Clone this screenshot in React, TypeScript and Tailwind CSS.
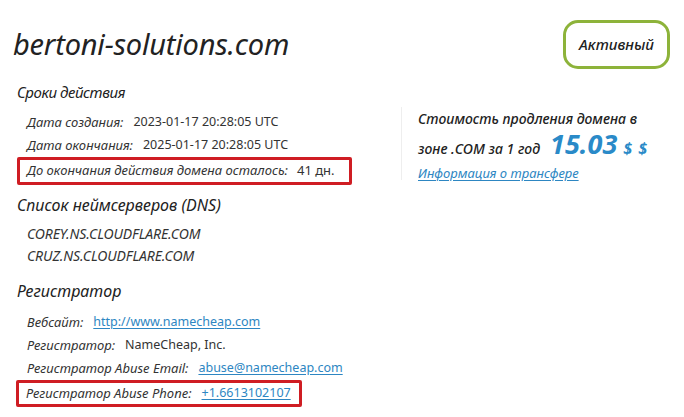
import React from "react";

const F = { fontFamily: '"Noto Sans", "Open Sans", sans-serif' };

function Row({ label, children }: { label: string; children: React.ReactNode }) {
  return (
    <div className="flex items-center h-[23px] text-[#333]">
      <span className="italic text-[13px]">{label}</span>
      <span className="ml-[10px] text-[12.5px]">{children}</span>
    </div>
  );
}

function Link({ children }: { children: React.ReactNode }) {
  return <span className="text-[#2d86c2] underline underline-offset-2">{children}</span>;
}

export default function App() {
  return (
    <div className="w-[684px] h-[417px] bg-white relative overflow-hidden" style={F}>
      <div className="flex justify-between items-start">
        <div className="pl-[13px] pt-[27px] text-[29px] leading-[34px] italic text-[#222] tracking-[-0.2px]">
          bertoni-solutions.com
        </div>
        <div className="mt-[20px] mr-[14px] w-[107px] h-[49px] border-[3px] border-[#8db33a] rounded-[15px] flex items-center justify-center italic font-medium text-[15px] text-[#222]">
          Активный
        </div>
      </div>
      <div className="flex">
        <div className="w-[401px] pl-[17px]">
          <div className="mt-[12px] text-[15px] italic text-[#222] leading-[22px] tracking-[-0.4px]">Сроки действия</div>
          <div className="mt-[8px] pl-[10px]">
            <Row label="Дата создания:">2023-01-17 20:28:05 UTC</Row>
            <Row label="Дата окончания:">2025-01-17 20:28:05 UTC</Row>
          </div>
          <div className="inline-block border-[3px] border-[#cf1d23] rounded-[2px] pl-[7px] pr-[14px] h-[28px] -mt-[1px]">
            <div className="flex items-center h-full text-[#333]">
              <span className="italic text-[13px]">До окончания действия домена осталось:</span>
              <span className="ml-[9px] text-[13px]">41 дн.</span>
            </div>
          </div>
          <div className="mt-[9px] text-[16px] italic text-[#222] leading-[22px]">Список неймсерверов (DNS)</div>
          <div className="mt-[7px] pl-[10px] text-[14px] italic text-[#333] uppercase tracking-[-0.1px]">
            <div className="h-[22px] flex items-center">COREY.NS.CLOUDFLARE.COM</div>
            <div className="h-[22px] flex items-center">CRUZ.NS.CLOUDFLARE.COM</div>
          </div>
          <div className="mt-[13px] text-[16px] italic text-[#222] leading-[22px]">Регистратор</div>
          <div className="mt-[9px] pl-[10px]">
            <Row label="Вебсайт:"><Link>http://www.namecheap.com</Link></Row>
            <Row label="Регистратор:">NameCheap, Inc.</Row>
            <Row label="Регистратор Abuse Email:"><Link>abuse@namecheap.com</Link></Row>
          </div>
          <div className="inline-block border-[3px] border-[#cf1d23] rounded-[2px] pl-[7px] pr-[8px] h-[27px] -ml-[1px]">
            <div className="flex items-center h-full text-[#333]">
              <span className="italic text-[13px]">Регистратор Abuse Phone:</span>
              <span className="ml-[10px] text-[12.5px]"><Link>+1.6613102107</Link></span>
            </div>
          </div>
        </div>
        <div className="mt-[38px] h-[73px] border-l border-[#eeeeee] pl-[16px] pt-[2px]">
          <div className="text-[14px] italic font-medium text-[#222] leading-[20px]">Стоимость продления домена в</div>
          <div className="flex items-baseline text-[14px] italic font-medium text-[#222] leading-[30px]">
            <span>зоне .COM за 1 год</span>
            <span className="ml-[10px] text-[27px] font-bold text-[#2a8ac8]">15.03</span>
            <span className="ml-[6px] text-[16px] font-bold text-[#2a8ac8] tracking-[1px]">$ $</span>
          </div>
          <div className="text-[13px] italic leading-[18px]"><Link>Информация о трансфере</Link></div>
        </div>
      </div>
    </div>
  );
}
